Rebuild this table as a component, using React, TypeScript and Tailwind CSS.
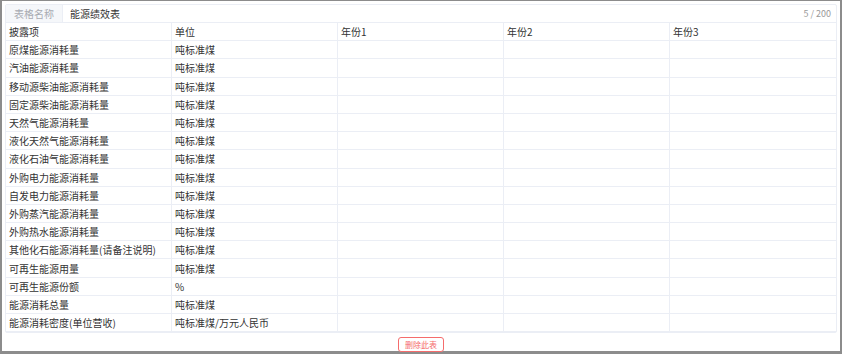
import React from 'react';

const rows: [string, string][] = [
  ['原煤能源消耗量', '吨标准煤'],
  ['汽油能源消耗量', '吨标准煤'],
  ['移动源柴油能源消耗量', '吨标准煤'],
  ['固定源柴油能源消耗量', '吨标准煤'],
  ['天然气能源消耗量', '吨标准煤'],
  ['液化天然气能源消耗量', '吨标准煤'],
  ['液化石油气能源消耗量', '吨标准煤'],
  ['外购电力能源消耗量', '吨标准煤'],
  ['自发电力能源消耗量', '吨标准煤'],
  ['外购蒸汽能源消耗量', '吨标准煤'],
  ['外购热水能源消耗量', '吨标准煤'],
  ['其他化石能源消耗量(请备注说明)', '吨标准煤'],
  ['可再生能源用量', '吨标准煤'],
  ['可再生能源份额', '%'],
  ['能源消耗总量', '吨标准煤'],
  ['能源消耗密度(单位营收)', '吨标准煤/万元人民币'],
];

const header = ['披露项', '单位', '年份1', '年份2', '年份3'];

const Row = ({ cells }: { cells: string[] }) => (
  <div className="grid grid-cols-5 h-[18.2px] border-b border-[#ebeef5]">
    {cells.map((c, i) => (
      <div
        key={i}
        className={`flex items-center px-[3px] text-[10px] text-[#333] whitespace-nowrap ${i < 4 ? 'border-r border-[#ebeef5]' : ''}`}
      >
        {c}
      </div>
    ))}
  </div>
);

export default function App() {
  return (
    <div
      className="w-[842px] h-[354px] bg-white border-t border-l-2 border-r-2 border-b-[3px] border-[#8c8c8c] flex flex-col"
      style={{ fontFamily: '"Noto Sans CJK SC", "Noto Sans", sans-serif' }}
    >
      <div className="mx-[3px] mt-[3px] border border-[#ebeef5] rounded-[2px] flex flex-col">
        <div className="flex items-center h-[18px] border-b border-[#ebeef5]">
          <div className="w-[57px] h-full bg-[#f5f7fa] border-r border-[#ebeef5] flex items-center justify-center text-[10px] text-[#a8abb2]">
            表格名称
          </div>
          <div className="flex-1 pl-[7px] text-[10px] text-[#333]">能源绩效表</div>
          <div className="pr-[5px] text-[9px] text-[#999]">5 / 200</div>
        </div>
        <Row cells={header} />
        {rows.map((r, i) => (
          <Row key={i} cells={[r[0], r[1], '', '', '']} />
        ))}
      </div>
      <div className="flex justify-center mt-[4px]">
        <button className="h-[15px] px-[6px] rounded-[3px] border border-[#f56c6c] text-[8px] leading-none text-[#f56c6c] bg-white">
          删除此表
        </button>
      </div>
    </div>
  );
}
